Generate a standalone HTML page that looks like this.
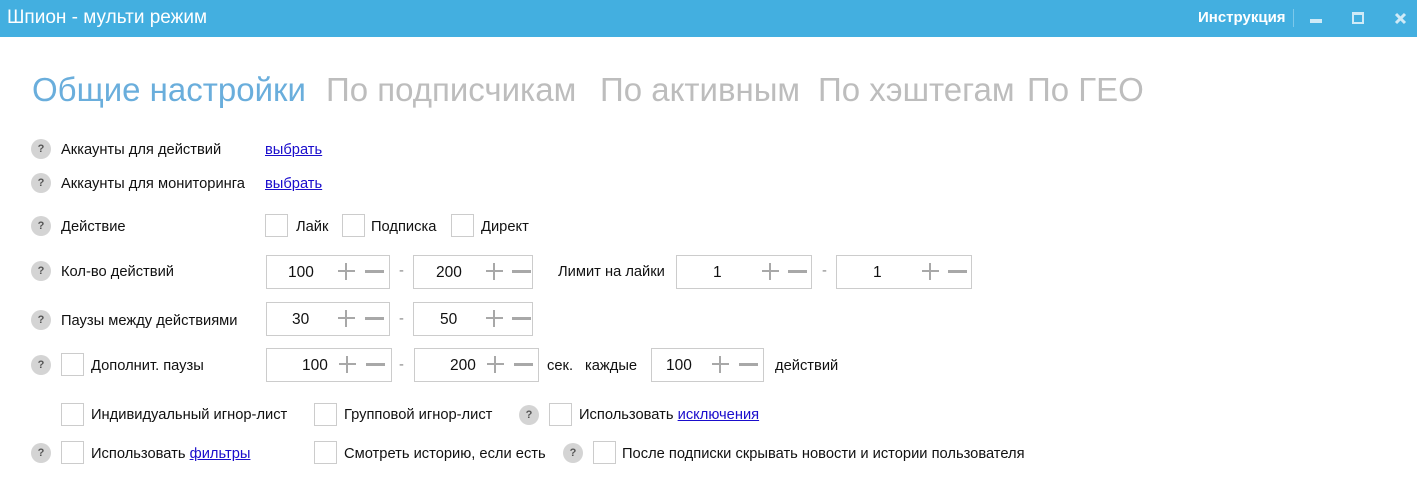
<!DOCTYPE html><html><head><meta charset="utf-8"><style>
body{margin:0;width:1417px;height:487px;background:#fff;font-family:"Segoe UI","Liberation Sans","DejaVu Sans",sans-serif;font-size:14.7px;color:#111;position:relative;overflow:hidden}
.a{position:absolute;white-space:nowrap}
.bar{left:0;top:0;width:1417px;height:37px;background:#43afe0}
.q{position:absolute;width:20px;height:20px;border-radius:50%;background:#d4d4d4;color:#555;font-size:11px;font-weight:bold;text-align:center;line-height:20px}
.cb{position:absolute;width:21px;height:21px;border:1px solid #ccc;background:#fff}
.sp{position:absolute;height:32px;border:1px solid #ccc;background:#fff}
.v{position:absolute;font-size:15.5px;margin-top:2px}
.pl{position:absolute;width:17px;height:17px}
.pl:before{content:"";position:absolute;left:0;top:7px;width:17px;height:2px;background:#a8a8a8}
.pl:after{content:"";position:absolute;left:7px;top:0;width:2px;height:17px;background:#a8a8a8}
.mi{position:absolute;width:19px;height:3px;background:#a8a8a8}
a{color:#1a0dcc;text-decoration:underline}
.tab{top:71px;font-size:33px;color:#bdbdbd}
.d{color:#888}
</style></head><body>
<div class="a bar"></div>
<div class="a" style="left:7px;top:7px;color:#fff;font-size:19px">Шпион - мульти режим</div>
<div class="a" style="left:1198px;top:9px;color:#fff;font-size:15px;font-weight:bold">Инструкция</div>
<div class="a" style="left:1293px;top:9px;width:1px;height:18px;background:#7cc8ea"></div>
<div class="a" style="left:1310px;top:19px;width:12px;height:4px;background:#cfeaf7"></div>
<div class="a" style="left:1352px;top:12px;width:8px;height:7px;border:2px solid #cfeaf7;border-top-width:3px"></div>
<svg class="a" style="left:1394px;top:12px" width="13" height="13"><path d="M2 2L11 11M11 2L2 11" stroke="#cfeaf7" stroke-width="3"/></svg>

<div class="a tab" style="left:32px;color:#6aaedc">Общие настройки</div>
<div class="a tab" style="left:326px">По подписчикам</div>
<div class="a tab" style="left:600px">По активным</div>
<div class="a tab" style="left:818px">По хэштегам</div>
<div class="a tab" style="left:1027px">По ГЕО</div>

<div class="q" style="left:31px;top:139px">?</div><div class="a" style="left:61px;top:142px">Аккаунты для действий</div><a class="a" style="left:265px;top:142px">выбрать</a>
<div class="q" style="left:31px;top:173px">?</div><div class="a" style="left:61px;top:176px">Аккаунты для мониторинга</div><a class="a" style="left:265px;top:176px">выбрать</a>
<div class="q" style="left:31px;top:216px">?</div><div class="a" style="left:61px;top:219px">Действие</div>
<div class="cb" style="left:265px;top:214px"></div><div class="a" style="left:296px;top:219px">Лайк</div>
<div class="cb" style="left:342px;top:214px"></div><div class="a" style="left:371px;top:219px">Подписка</div>
<div class="cb" style="left:451px;top:214px"></div><div class="a" style="left:481px;top:219px">Директ</div>

<div class="q" style="left:31px;top:261px">?</div><div class="a" style="left:61px;top:264px">Кол-во действий</div>
<div class="sp" style="left:266px;top:255px;width:122px"></div>
<div class="v" style="left:288px;top:262px">100</div><div class="pl" style="left:338px;top:263px"></div><div class="mi" style="left:365px;top:270px"></div>
<div class="a d" style="left:399px;top:263px">-</div>
<div class="sp" style="left:413px;top:255px;width:118px"></div>
<div class="v" style="left:436px;top:262px">200</div><div class="pl" style="left:486px;top:263px"></div><div class="mi" style="left:512px;top:270px"></div>
<div class="a" style="left:558px;top:264px">Лимит на лайки</div>
<div class="sp" style="left:676px;top:255px;width:134px"></div>
<div class="v" style="left:713px;top:262px">1</div><div class="pl" style="left:762px;top:263px"></div><div class="mi" style="left:788px;top:270px"></div>
<div class="a d" style="left:822px;top:263px">-</div>
<div class="sp" style="left:836px;top:255px;width:134px"></div>
<div class="v" style="left:873px;top:262px">1</div><div class="pl" style="left:922px;top:263px"></div><div class="mi" style="left:948px;top:270px"></div>

<div class="q" style="left:31px;top:310px">?</div><div class="a" style="left:61px;top:313px">Паузы между действиями</div>
<div class="sp" style="left:266px;top:302px;width:122px"></div>
<div class="v" style="left:292px;top:309px">30</div><div class="pl" style="left:338px;top:310px"></div><div class="mi" style="left:365px;top:317px"></div>
<div class="a d" style="left:399px;top:311px">-</div>
<div class="sp" style="left:413px;top:302px;width:118px"></div>
<div class="v" style="left:440px;top:309px">50</div><div class="pl" style="left:486px;top:310px"></div><div class="mi" style="left:512px;top:317px"></div>

<div class="q" style="left:31px;top:355px">?</div><div class="cb" style="left:61px;top:353px"></div><div class="a" style="left:91px;top:358px">Дополнит. паузы</div>
<div class="sp" style="left:266px;top:348px;width:124px"></div>
<div class="v" style="left:302px;top:355px">100</div><div class="pl" style="left:339px;top:356px"></div><div class="mi" style="left:366px;top:363px"></div>
<div class="a d" style="left:399px;top:357px">-</div>
<div class="sp" style="left:414px;top:348px;width:123px"></div>
<div class="v" style="left:450px;top:355px">200</div><div class="pl" style="left:487px;top:356px"></div><div class="mi" style="left:514px;top:363px"></div>
<div class="a" style="left:547px;top:358px">сек.</div><div class="a" style="left:585px;top:358px">каждые</div>
<div class="sp" style="left:651px;top:348px;width:111px"></div>
<div class="v" style="left:666px;top:355px">100</div><div class="pl" style="left:712px;top:356px"></div><div class="mi" style="left:739px;top:363px"></div>
<div class="a" style="left:775px;top:358px">действий</div>

<div class="cb" style="left:61px;top:403px"></div><div class="a" style="left:91px;top:407px">Индивидуальный игнор-лист</div>
<div class="cb" style="left:314px;top:403px"></div><div class="a" style="left:344px;top:407px">Групповой игнор-лист</div>
<div class="q" style="left:519px;top:405px">?</div><div class="cb" style="left:549px;top:403px"></div><div class="a" style="left:579px;top:407px">Использовать <a>исключения</a></div>

<div class="q" style="left:31px;top:443px">?</div><div class="cb" style="left:61px;top:441px"></div><div class="a" style="left:91px;top:446px">Использовать <a>фильтры</a></div>
<div class="cb" style="left:314px;top:441px"></div><div class="a" style="left:344px;top:446px">Смотреть историю, если есть</div>
<div class="q" style="left:563px;top:443px">?</div><div class="cb" style="left:593px;top:441px"></div><div class="a" style="left:622px;top:446px">После подписки скрывать новости и истории пользователя</div>
</body></html>
